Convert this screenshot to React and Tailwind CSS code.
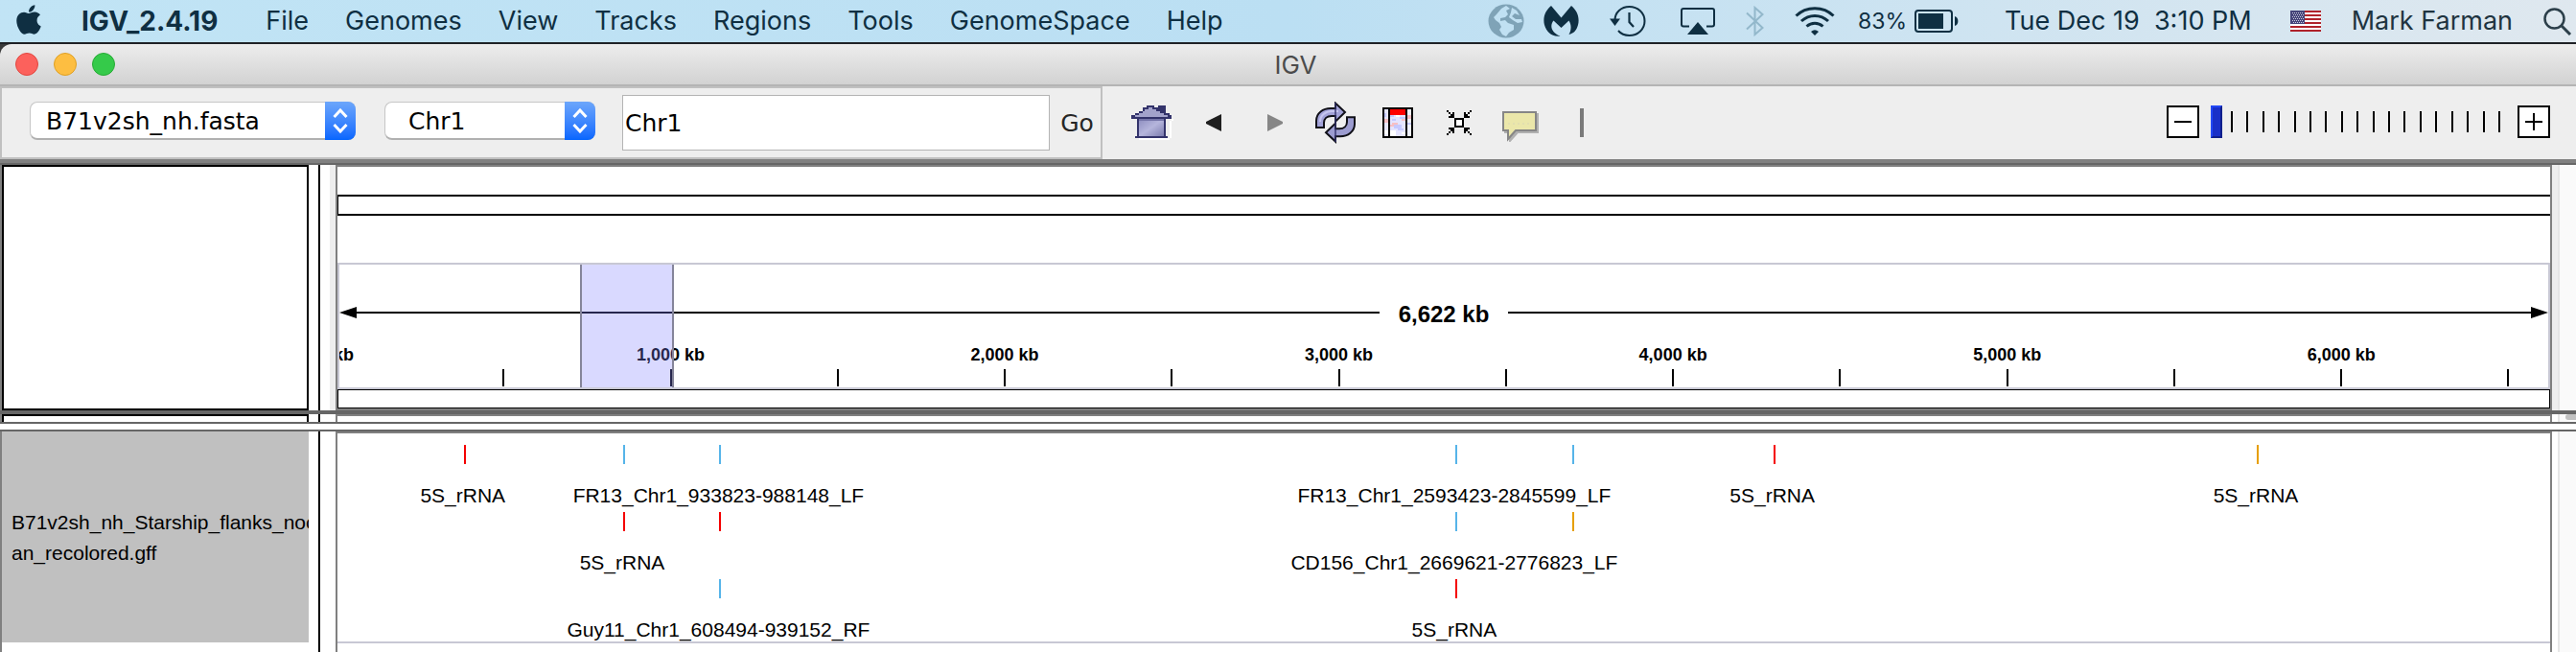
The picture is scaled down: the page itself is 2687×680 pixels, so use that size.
import React from "react";
import { FaApple } from "react-icons/fa";

const MENUS = ["File", "Genomes", "View", "Tracks", "Regions", "Tools", "GenomeSpace", "Help"];

const CHROMOSOME_KB = 6622;
const pct = (kb) => `${(kb / CHROMOSOME_KB) * 100}%`;

const TICKS = Array.from({ length: 13 }, (_, i) => (i + 1) * 500);
const LABELS = [0, 1000, 2000, 3000, 4000, 5000, 6000];

const RED = "bg-[#f40000]";
const BLUE = "bg-[#56b4e9]";
const ORANGE = "bg-[#e69f00]";

const FEATURE_ROWS = [
  [
    { kb: 381, color: RED, label: "5S_rRNA" },
    { kb: 858, color: BLUE },
    { kb: 1146, color: BLUE, label: "FR13_Chr1_933823-988148_LF" },
    { kb: 3348, color: BLUE, label: "FR13_Chr1_2593423-2845599_LF" },
    { kb: 3698, color: BLUE },
    { kb: 4300, color: RED, label: "5S_rRNA" },
    { kb: 5747, color: ORANGE, label: "5S_rRNA" },
  ],
  [
    { kb: 858, color: RED, label: "5S_rRNA" },
    { kb: 1146, color: RED },
    { kb: 3348, color: BLUE, label: "CD156_Chr1_2669621-2776823_LF" },
    { kb: 3698, color: ORANGE },
  ],
  [
    { kb: 1146, color: BLUE, label: "Guy11_Chr1_608494-939152_RF" },
    { kb: 3348, color: RED, label: "5S_rRNA" },
  ],
];

function GlobeIcon() {
  return (
    <svg width="38" height="36" viewBox="0 0 38 36" aria-hidden="true">
      <ellipse cx="19" cy="18" rx="18.5" ry="17.5" fill="#7fa3b7" />
      <path
        d="M19 2 L14 5 L9 11 L6 14 L8 17 L12 20 L14 24 L12 27 L15 32 L19 34 L22 30 L27 27 L27 22 L21 20 L18 17 L13 18 L13 15 L18 14 L21 11 L19 7 L23 5 Z"
        fill="#c0e0f2"
      />
      <path d="M25 4 L30 7 L33 12 L28 10 L25 13 L29 16 L35 16 L36 19 L31 20 L26 17 L22 14 L24 9 Z" fill="#c0e0f2" />
    </svg>
  );
}

function WingsIcon() {
  return (
    <svg width="37" height="32" viewBox="0 0 37 32" fill="#0f2f42" aria-hidden="true">
      <path d="M8 0 L18.5 12.5 L29 0 C35 5 38 12 36 20 C34.5 26 31 29 26.5 30 C29 26 29.5 20 26.5 15.5 L18.5 23 L10.5 15.5 C6.5 20 7.5 28 17.5 31.5 C9 33 3 27 1 20 C-1 12 2 5 8 0 Z" />
    </svg>
  );
}

function ClockIcon() {
  return (
    <svg width="38" height="32" viewBox="0 0 38 32" fill="none" stroke="#0f2f42" strokeWidth="2" aria-hidden="true">
      <path d="M5.5 15 C5.5 7 12 1 20.500 1 C29.500 1 36.500 7.500 36.500 16 C36.500 24.500 29.500 31 20.500 31 C15.500 31 11.500 29 9 26" />
      <path d="M20.5 7 V17 L25 22" strokeWidth="2.200" />
      <path d="M0 13.500 H11 L5.5 21 Z" fill="#0f2f42" stroke="none" />
    </svg>
  );
}

function AirplayIcon() {
  return (
    <svg width="36" height="28" viewBox="0 0 36 28" fill="none" stroke="#0f2f42" strokeWidth="2" aria-hidden="true">
      <path d="M9 19.500 H3 Q1 19.500 1 17.500 V3 Q1 1 3 1 H33 Q35 1 35 3 V17.500 Q35 19.500 33 19.500 H27" />
      <path d="M18 15 L29 28 H7 Z" fill="#0f2f42" stroke="none" />
    </svg>
  );
}

function BluetoothIcon() {
  return (
    <svg width="19" height="32" viewBox="0 0 19 32" fill="none" stroke="#93b8cb" strokeWidth="2" aria-hidden="true">
      <path d="M1 7.500 L17.500 23 L9.500 30 V2 L17.500 9 L1 24.500" />
    </svg>
  );
}

function WifiIcon() {
  return (
    <svg width="42" height="30" viewBox="0 0 42 30" fill="none" stroke="#0f2f42" strokeWidth="3" aria-hidden="true">
      <path d="M1.500 9.500 C12 -1 30 -1 40.500 9.500" />
      <path d="M7 15 C15 7.500 27 7.500 35 15" />
      <path d="M12.500 20.500 C17.500 16 24.500 16 29.500 20.500" />
      <path d="M17 26 Q21 22.500 25 26 L21 30 Z" fill="#0f2f42" stroke="none" />
    </svg>
  );
}

function BatteryIcon() {
  return (
    <svg width="46" height="24" viewBox="0 0 46 24" aria-hidden="true">
      <rect x="1" y="1" width="38" height="22" rx="3" fill="none" stroke="#0f2f42" strokeWidth="2" />
      <rect x="4" y="4" width="26" height="16" fill="#0f2f42" />
      <path d="M42 7 C46.500 8 46.500 16 42 17 Z" fill="#0f2f42" />
    </svg>
  );
}

function FlagIcon() {
  return (
    <svg width="32" height="22" viewBox="0 0 32 22" shapeRendering="crispEdges" aria-hidden="true">
      <rect width="32" height="22" fill="#ffffff" />
      {[0, 4, 8, 12, 16, 20].map((y) => (
        <rect key={y} y={y} width="32" height="2" fill="#b0232b" />
      ))}
      <rect width="15" height="14" fill="#46457a" />
      {[2, 4, 6, 8, 10, 12].map((y, r) =>
        [2, 4, 6, 8, 10, 12].map((x) => (
          <rect key={`${x}-${y}`} x={x + (r % 2) - 0.5} y={y - 0.5} width="1" height="1" fill="#c9c9dc" />
        ))
      )}
    </svg>
  );
}

function SearchIcon() {
  return (
    <svg width="30" height="29" viewBox="0 0 30 29" fill="none" stroke="#2c3f4a" strokeWidth="2.500" aria-hidden="true">
      <circle cx="11.5" cy="11.5" r="10" />
      <path d="M18.500 18.500 L28 28" strokeWidth="3" />
    </svg>
  );
}

function HomeIcon() {
  return (
    <svg width="44" height="36" viewBox="0 0 22 18" shapeRendering="crispEdges" aria-hidden="true">
      <defs>
        <linearGradient id="wall" x1="0" y1="0" x2="1" y2="1">
          <stop offset="0" stopColor="#8d8dc0" />
          <stop offset="0.500" stopColor="#b5b5dc" />
          <stop offset="1" stopColor="#7c7cae" />
        </linearGradient>
      </defs>
      <path d="M4 17 H20 V18 H4 Z M20 8 H21 V17 H20 Z M21 7 H22 V8 H21 Z" fill="#ffffff" />
      <path d="M14 0 H18 V5 H14 Z" fill="#33336b" />
      <path d="M8 0 H12 V1 H14 V2 H16 V3 H18 V4 H20 V5 H21 V7 H0 V5 H2 V4 H4 V3 H6 V1 H8 Z" fill="#33336b" />
      <path d="M9 1 H11 V2 H13 V3 H15 V4 H17 V5 H19 V6 H2 V5 H4 V4 H6 V3 H7 V2 H9 Z" fill="#a3a3cb" />
      <path d="M3 7 H18 V17 H3 Z" fill="#33336b" />
      <path d="M2 16 H19 V17 H2 Z" fill="#33336b" />
      <rect x="4" y="7" width="13" height="9" fill="url(#wall)" />
      <rect x="4" y="7" width="13" height="1" fill="#7474a8" />
    </svg>
  );
}

function BackIcon() {
  return (
    <svg width="16" height="18" viewBox="0 0 16 18" aria-hidden="true">
      <path d="M16 0 V18 L0 10 V8 Z" fill="#1f1f1f" />
    </svg>
  );
}

function ForwardIcon() {
  return (
    <svg width="16" height="18" viewBox="0 0 16 18" aria-hidden="true">
      <path d="M0 0 V18 L16 10 V8 Z" fill="#868686" />
    </svg>
  );
}

function RefreshIcon() {
  const arrow =
    "M0.500 13.500 V10 C0.500 6 4 3.500 8 3.500 H10.500 V0.800 L15.500 5.500 L10.500 10.300 V7.500 H8.500 C6 7.500 4.500 9 4.500 11 V13.500 Z";
  return (
    <svg width="44" height="44" viewBox="0 0 22 22" aria-hidden="true">
      <path d={arrow} fill="#a2a2d8" stroke="#101018" />
      <path d="M2.500 10.500 C2.500 7 5.500 5 8.500 5 H12" stroke="#c6c6f0" fill="none" />
      <path d={arrow} fill="#9c9cd0" stroke="#101018" transform="rotate(180 10.500 10.800)" />
      <path d="M10.500 0.500 V21" stroke="#33336b" strokeWidth="0.700" />
    </svg>
  );
}

function RegionIcon() {
  return (
    <svg width="32" height="32" viewBox="0 0 16 16" shapeRendering="crispEdges" aria-hidden="true">
      <rect width="16" height="16" fill="#000000" />
      <rect x="1" y="1" width="2" height="14" fill="#e6e6ff" />
      <rect x="13" y="1" width="2" height="14" fill="#eef0ff" />
      <rect x="4" y="1" width="8" height="14" fill="#e4e4ff" />
      <rect x="4" y="1" width="8" height="3" fill="#ff0000" />
      <path d="M4 4 H6 V5 H4 Z M9 5 H12 V6 H9 Z M6 9 H10 V11 H6 Z M8 11 H11 V12 H8 Z M5 6 H7 V7 H5 Z M1 3 H2 V5 H1 Z M13 8 H15 V9 H13 Z" fill="#c5c8ff" />
      <path d="M5 8 H8 V9 H5 Z M10 6 H12 V7 H10 Z M4 9 H6 V10 H4 Z M1 6 H3 V8 H1 Z M13 4 H15 V6 H13 Z" fill="#f7bfc4" />
      <path d="M4 12 H7 V15 H4 Z M10 13 H12 V14 H10 Z M1 12 H3 V14 H1 Z M7 4 H9 V5 H7 Z" fill="#ffffff" />
    </svg>
  );
}

function ShrinkIcon() {
  const corner = "M0 0 H1 V1 H0 Z M1 1 H2 V2 H1 Z M2 2 H3 V3 H2 Z M3 1 H4 V4 H1 V3 H3 Z";
  return (
    <svg width="26" height="26" viewBox="0 0 13 13" shapeRendering="crispEdges" aria-hidden="true">
      <path d={corner} />
      <path d={corner} transform="translate(13 0) scale(-1 1)" />
      <path d={corner} transform="translate(0 13) scale(1 -1)" />
      <path d={corner} transform="translate(13 13) scale(-1 -1)" />
      <rect x="4" y="4" width="5" height="5" />
      <rect x="5" y="5" width="3" height="3" fill="#ffffff" />
    </svg>
  );
}

function CommentIcon() {
  return (
    <svg width="38" height="32" viewBox="0 0 19 16" aria-hidden="true">
      <path d="M1.500 1.500 H18.500 V11 H8 L4 15.500 L3.500 11 H1.500 Z" fill="#b0b0b0" stroke="#b0b0b0" />
      <path d="M0.500 0.500 H17.500 V10 H7 L3 14.500 V10 H0.500 Z" fill="#ebe7aa" stroke="#868686" />
      <path d="M3 6.500 H14" stroke="#d9d6b4" strokeWidth="0.500" strokeDasharray="1 1.500" />
    </svg>
  );
}

function PopupSelect({ id, label, value, width, padding }) {
  return (
    <div className={`relative mb-1 h-10 ${width}`}>
      <select
        id={id}
        aria-label={label}
        defaultValue={value}
        className={`h-10 w-full appearance-none rounded-lg border border-b-2 border-[#c6c6c6] border-b-[#b0b0b0] bg-white pt-0.5 pr-9 text-[25px] leading-9 text-black ${padding}`}
      >
        <option>{value}</option>
      </select>
      <span className="pointer-events-none absolute inset-y-0 right-0 flex w-8 items-center justify-center rounded-r-lg bg-linear-to-b from-[#6ca6fb] to-[#0566fe]">
        <svg width="16" height="26" viewBox="0 0 16 26" fill="none" stroke="#ffffff" strokeWidth="3" aria-hidden="true">
          <path d="M1.500 9 L8 2 L14.500 9 M1.500 17 L8 24 L14.500 17" />
        </svg>
      </span>
    </div>
  );
}

function ToolButton({ label, children }) {
  return (
    <button type="button" aria-label={label} className="flex h-full w-16 items-center justify-center">
      {children}
    </button>
  );
}

function MenuBar() {
  return (
    <header className="flex h-[46px] shrink-0 items-center justify-between border-b-2 border-[#1f2226] bg-linear-to-r from-[#c1e4f5] via-[#bbdff3] via-50% to-[#dfe8ef] pr-1 pl-[17px] text-[27px] leading-8 whitespace-nowrap text-[#0f2f42]">
      <nav className="flex items-center gap-[38px]" aria-label="Application menu">
        <a href="#apple" aria-label="Apple" className="-mt-1 mr-1">
          <FaApple size={35} className="w-[26px]" />
        </a>
        <a href="#igv" className="mr-3 text-[28px] font-bold">
          IGV_2.4.19
        </a>
        {MENUS.map((m) => (
          <a key={m} href={`#${m}`}>
            {m}
          </a>
        ))}
      </nav>
      <div className="flex items-center">
        <GlobeIcon />
        <span className="ml-5">
          <WingsIcon />
        </span>
        <span className="ml-8">
          <ClockIcon />
        </span>
        <span className="ml-9">
          <AirplayIcon />
        </span>
        <span className="ml-8">
          <BluetoothIcon />
        </span>
        <span className="ml-8">
          <WifiIcon />
        </span>
        <span className="ml-6 text-[23px]">83%</span>
        <span className="ml-2">
          <BatteryIcon />
        </span>
        <span className="ml-12 whitespace-pre">Tue Dec 19  3:10 PM</span>
        <span className="ml-10">
          <FlagIcon />
        </span>
        <span className="ml-8 text-[#1f3440]">Mark Farman</span>
        <button type="button" aria-label="Search" className="ml-8">
          <SearchIcon />
        </button>
      </div>
    </header>
  );
}

function TitleBar() {
  return (
    <div className="shrink-0 bg-[#3a3a3a]">
      <div className="grid h-11 grid-cols-3 items-center rounded-tl-xl border-b-2 border-[#b4b4b4] bg-linear-to-b from-[#ededed] to-[#d2d2d2] pl-4">
        <div className="flex gap-4">
          <button type="button" aria-label="Close" className="size-6 rounded-full border border-[#e2463f] bg-[#fc615c]" />
          <button type="button" aria-label="Minimize" className="size-6 rounded-full border border-[#dfa023] bg-[#fdbe41]" />
          <button type="button" aria-label="Zoom" className="size-6 rounded-full border border-[#27ab35] bg-[#35ca4a]" />
        </div>
        <h1 className="pt-0.5 text-center text-[26px] leading-8 text-[#4b4b4b]">IGV</h1>
      </div>
    </div>
  );
}

function Toolbar() {
  return (
    <div className="flex h-[76px] shrink-0 items-stretch bg-[#eeeeee]">
      <form
        className="flex items-center border-2 border-[#c0c0c0] pr-1 pl-[29px] font-['DejaVu_Sans',sans-serif] text-[25px]"
        onSubmit={(e) => e.preventDefault()}
      >
        <PopupSelect id="genome" label="Genome" value="B71v2sh_nh.fasta" width="w-[340px]" padding="pl-4" />
        <span className="w-[30px]" />
        <PopupSelect id="chromosome" label="Chromosome" value="Chr1" width="w-[220px]" padding="pl-6" />
        <input
          id="locus"
          type="text"
          aria-label="Locus"
          defaultValue="Chr1"
          className="ml-7 h-[58px] w-[446px] border border-[#b4b4b4] bg-white px-0.5 text-black"
        />
        <button type="submit" className="w-[49px] pt-0.5 pl-2 text-[#262626]">
          Go
        </button>
      </form>
      <div className="ml-5 flex">
        <ToolButton label="Home">
          <HomeIcon />
        </ToolButton>
        <ToolButton label="Back">
          <BackIcon />
        </ToolButton>
        <ToolButton label="Forward">
          <ForwardIcon />
        </ToolButton>
        <ToolButton label="Refresh">
          <RefreshIcon />
        </ToolButton>
        <ToolButton label="Define a region of interest">
          <RegionIcon />
        </ToolButton>
        <ToolButton label="Resize tracks to fit in window">
          <ShrinkIcon />
        </ToolButton>
        <ToolButton label="Popup text behavior">
          <span className="pt-2">
            <CommentIcon />
          </span>
        </ToolButton>
        <ToolButton label="Center line">
          <span className="h-[30px] w-1 bg-[#7a7a7a]" />
        </ToolButton>
      </div>
      <div className="ml-auto flex items-center pr-[27px] pb-0.5">
        <button type="button" aria-label="Zoom out" className="flex size-[34px] items-center justify-center border-2 border-black bg-white">
          <span className="h-0.5 w-[18px] bg-black" />
        </button>
        <div className="relative ml-3 flex h-[34px] w-[302px] items-center justify-between pl-[21px]">
          {Array.from({ length: 18 }, (_, i) => (
            <span key={i} className="h-[22px] w-0.5 bg-black" />
          ))}
          <input
            type="range"
            aria-label="Zoom level"
            min="0"
            max="18"
            defaultValue="0"
            className="absolute inset-0 h-[34px] w-full appearance-none bg-transparent [&::-webkit-slider-thumb]:h-[34px] [&::-webkit-slider-thumb]:w-3 [&::-webkit-slider-thumb]:appearance-none [&::-webkit-slider-thumb]:border-2 [&::-webkit-slider-thumb]:border-t-[#2348f5] [&::-webkit-slider-thumb]:border-r-[#101f8c] [&::-webkit-slider-thumb]:border-b-[#101f8c] [&::-webkit-slider-thumb]:border-l-[#2348f5] [&::-webkit-slider-thumb]:bg-[#1a30c8]"
          />
        </div>
        <button type="button" aria-label="Zoom in" className="ml-[18px] flex size-[34px] items-center justify-center border-2 border-black bg-white">
          <svg width="18" height="18" viewBox="0 0 18 18" shapeRendering="crispEdges" aria-hidden="true">
            <path d="M8 0 H10 V8 H18 V10 H10 V18 H8 V10 H0 V8 H8 Z" />
          </svg>
        </button>
      </div>
    </div>
  );
}

function PanelRow({ className, name, gutter, track, children }) {
  return (
    <section className={`flex ${className}`}>
      <div className="w-0.5 shrink-0 bg-[#808080]" />
      <div className="w-80 shrink-0">{name}</div>
      <div className="ml-2.5 w-0.5 shrink-0 bg-black" />
      <div className={`ml-2.5 w-1.5 shrink-0 ${gutter}`} />
      <div className="min-w-0 flex-1 border-x-2 border-[#808080] bg-white">{children}</div>
      <div className={`w-1.5 shrink-0 ${gutter}`} />
      <div className="w-[19px] shrink-0 border-l-2 border-[#e6e6e6] bg-[#fafafa]">{track}</div>
    </section>
  );
}

function Ruler() {
  return (
    <div className="relative h-[132px] overflow-hidden border-2 border-[#c8c8d4] bg-white font-bold">
      <div className="mt-8 flex h-9 items-center whitespace-nowrap">
        <span className="flex flex-1 items-center">
          <svg width="18" height="12" viewBox="0 0 18 12" aria-hidden="true">
            <path d="M18 0 V12 L0 6 Z" />
          </svg>
          <span className="h-0.5 flex-1 bg-black" />
        </span>
        <span className="px-5 pt-1 text-2xl leading-6">6,622 kb</span>
        <span className="flex flex-1 items-center">
          <span className="h-0.5 flex-1 bg-black" />
          <svg width="18" height="12" viewBox="0 0 18 12" aria-hidden="true">
            <path d="M0 0 V12 L18 6 Z" />
          </svg>
        </span>
      </div>
      <div className="absolute -inset-x-0.5 inset-y-0">
        {LABELS.map((kb) => (
          <span
            key={kb}
            className="absolute top-[84px] -ml-px -translate-x-1/2 text-lg leading-5 whitespace-nowrap"
            style={{ left: pct(kb) }}
          >
            {kb.toLocaleString("en-US")} kb
          </span>
        ))}
        {TICKS.map((kb) => (
          <span key={kb} className="absolute top-[109px] -ml-0.5 h-[18px] w-0.5 bg-black" style={{ left: pct(kb) }} />
        ))}
        <div
          className="absolute inset-y-0 border-x-2 border-[#85859a] bg-[#8080ff]/30"
          style={{ left: pct(726), width: pct(281) }}
        />
      </div>
    </div>
  );
}

export default function App() {
  return (
    <div className="flex min-h-screen flex-col bg-white font-['Inter',sans-serif] text-black">
      <MenuBar />
      <TitleBar />
      <Toolbar />
      <main className="flex flex-1 flex-col overflow-hidden font-['Liberation_Sans',Arial,sans-serif]">
        <div className="h-1.5 shrink-0 border-b-2 border-[#666666] bg-[#808080]" />
        <PanelRow
          className="shrink-0"
          gutter="bg-[#eeeeee]"
          name={<div className="h-full border-2 border-black bg-white" />}
        >
          <div className="border-y-2 border-[#808080] pt-[29px]">
            <div className="h-[22px] border-y-2 border-l border-black" />
            <div className="h-[49px]" />
            <Ruler />
            <div className="h-5 border border-black" />
          </div>
        </PanelRow>
        <div className="h-1 shrink-0 bg-[#666666]" />
        <PanelRow
          className="h-2 shrink-0"
          gutter="bg-white"
          name={<div className="h-full border-2 border-b-0 border-black bg-white" />}
          track={<div className="ml-1.5 h-1.5 rounded-l-full bg-[#c1c1c1]" />}
        >
          <div className="h-0.5 bg-[#808080]" />
        </PanelRow>
        <div className="h-2.5 shrink-0 border-y-2 border-[#666666] bg-white" />
        <PanelRow
          className="flex-1"
          gutter="bg-white"
          name={
            <div className="flex h-[220px] flex-col justify-center overflow-hidden bg-[#c0c0c0] pt-0.5 pl-2.5 text-[21px] leading-8 whitespace-nowrap">
              <p>B71v2sh_nh_Starship_flanks_nocle</p>
              <p>an_recolored.gff</p>
            </div>
          }
        >
          <div className="h-[221px] border-t-2 border-b-2 border-t-[#808080] border-b-[#c8c8d4]">
            {FEATURE_ROWS.map((row, r) => (
              <div key={r} className="relative h-[70px]">
                {row.map((f) => (
                  <React.Fragment key={f.kb}>
                    <span className={`absolute top-3 -ml-px h-5 w-0.5 ${f.color}`} style={{ left: pct(f.kb) }} />
                    {f.label && (
                      <span
                        className="absolute top-[53px] -ml-0.5 -translate-x-1/2 text-[21px] leading-6 whitespace-nowrap"
                        style={{ left: pct(f.kb) }}
                      >
                        {f.label}
                      </span>
                    )}
                  </React.Fragment>
                ))}
              </div>
            ))}
          </div>
        </PanelRow>
      </main>
    </div>
  );
}
